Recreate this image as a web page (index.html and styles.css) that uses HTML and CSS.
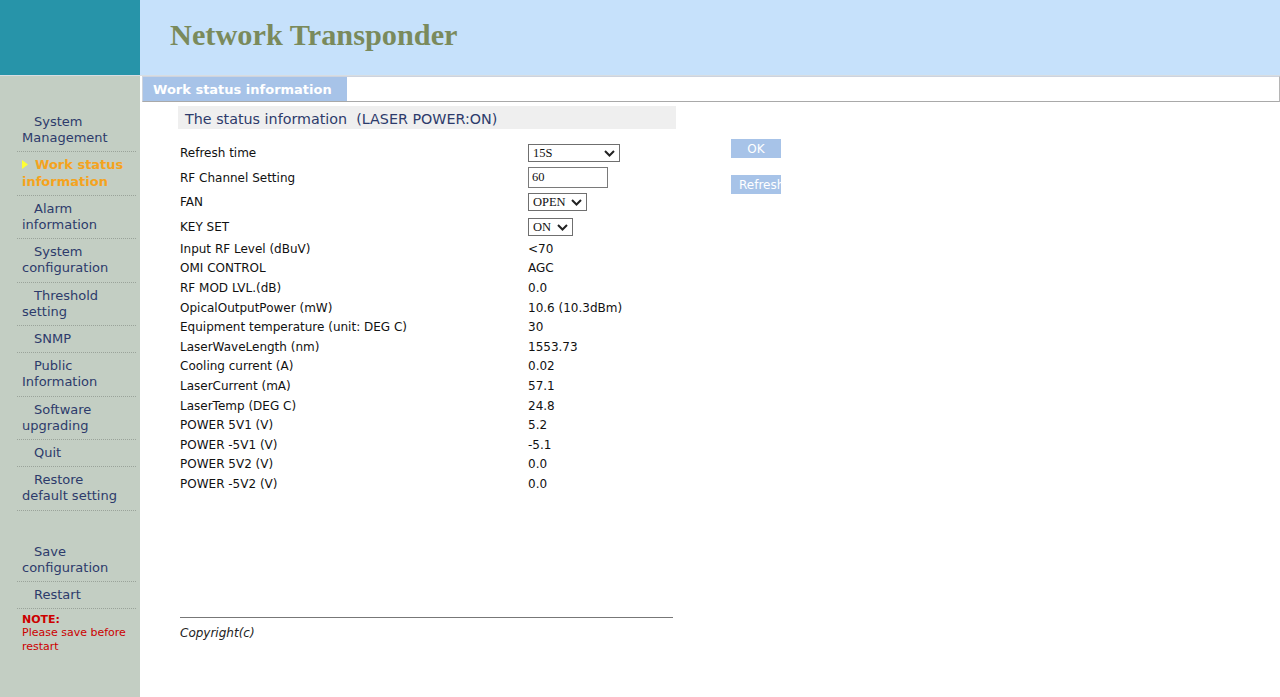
FILE: index.html
```html
<!DOCTYPE html>
<html>
<head>
<meta charset="utf-8">
<title>Network Transponder</title>
<link rel="stylesheet" href="styles.css">
</head>
<body>
<div class="page">
  <header class="top">
    <div class="logo-block"></div>
    <div class="title-block"><h1 class="title">Network Transponder</h1></div>
  </header>
  <div class="body">
    <nav class="side">
      <ul class="menu">
        <li class="item">System Management</li>
        <li class="item active"><svg class="arrow" width="6" height="9" viewBox="0 0 6 9"><path d="M0 0 L6 4.5 L0 9 Z" fill="#ffff33"/></svg>Work status information</li>
        <li class="item">Alarm information</li>
        <li class="item">System configuration</li>
        <li class="item">Threshold setting</li>
        <li class="item">SNMP</li>
        <li class="item">Public Information</li>
        <li class="item">Software upgrading</li>
        <li class="item">Quit</li>
        <li class="item">Restore default setting</li>
      </ul>
      <ul class="menu menu-second">
        <li class="item">Save configuration</li>
        <li class="item">Restart</li>
      </ul>
      <div class="note">
        <div class="note-title">NOTE:</div>
        <div class="note-text">Please save before restart</div>
      </div>
    </nav>
    <main class="main">
      <div class="tabbar"><div class="tab">Work status information</div></div>
      <div class="content">
        <div class="form-area">
          <div class="status-box">The status information&nbsp;&nbsp;(LASER POWER:ON)</div>
          <table class="data">
            <tr class="form-row"><td class="label">Refresh time</td><td class="value">
              <span class="sel sel-refresh"><select><option>15S</option></select><svg class="chev" width="11" height="7" viewBox="0 0 11 7"><path d="M1 1 L5.5 5.5 L10 1" fill="none" stroke="#222" stroke-width="2"/></svg></span>
            </td></tr>
            <tr class="form-row"><td class="label">RF Channel Setting</td><td class="value"><input class="txt" type="text" value="60"></td></tr>
            <tr class="form-row"><td class="label">FAN</td><td class="value">
              <span class="sel sel-fan"><select><option>OPEN</option></select><svg class="chev" width="11" height="7" viewBox="0 0 11 7"><path d="M1 1 L5.5 5.5 L10 1" fill="none" stroke="#222" stroke-width="2"/></svg></span>
            </td></tr>
            <tr class="form-row"><td class="label">KEY SET</td><td class="value">
              <span class="sel sel-key"><select><option>ON</option></select><svg class="chev" width="11" height="7" viewBox="0 0 11 7"><path d="M1 1 L5.5 5.5 L10 1" fill="none" stroke="#222" stroke-width="2"/></svg></span>
            </td></tr>
            <tr class="text-row"><td class="label">Input RF Level (dBuV)</td><td class="value">&lt;70</td></tr>
            <tr class="text-row"><td class="label">OMI CONTROL</td><td class="value">AGC</td></tr>
            <tr class="text-row"><td class="label">RF MOD LVL.(dB)</td><td class="value">0.0</td></tr>
            <tr class="text-row"><td class="label">OpicalOutputPower (mW)</td><td class="value">10.6 (10.3dBm)</td></tr>
            <tr class="text-row"><td class="label">Equipment temperature (unit: DEG C)</td><td class="value">30</td></tr>
            <tr class="text-row"><td class="label">LaserWaveLength (nm)</td><td class="value">1553.73</td></tr>
            <tr class="text-row"><td class="label">Cooling current (A)</td><td class="value">0.02</td></tr>
            <tr class="text-row"><td class="label">LaserCurrent (mA)</td><td class="value">57.1</td></tr>
            <tr class="text-row"><td class="label">LaserTemp (DEG C)</td><td class="value">24.8</td></tr>
            <tr class="text-row"><td class="label">POWER 5V1 (V)</td><td class="value">5.2</td></tr>
            <tr class="text-row"><td class="label">POWER -5V1 (V)</td><td class="value">-5.1</td></tr>
            <tr class="text-row"><td class="label">POWER 5V2 (V)</td><td class="value">0.0</td></tr>
            <tr class="text-row"><td class="label">POWER -5V2 (V)</td><td class="value">0.0</td></tr>
          </table>
          <footer class="footer">
            <div class="copyright">Copyright(c)</div>
          </footer>
        </div>
        <div class="buttons">
          <div class="btn btn-ok">OK</div>
          <div class="btn btn-refresh">Refresh</div>
        </div>
      </div>
    </main>
  </div>
</div>
</body>
</html>
```

FILE: styles.css
```css
* { box-sizing: border-box; }
html, body { margin: 0; padding: 0; background: #ffffff; }
body {
  font-family: "DejaVu Sans", Verdana, sans-serif;
  width: 1280px;
  height: 697px;
  overflow: hidden;
}
.page { display: flex; flex-direction: column; height: 697px; }

.top {
  display: flex;
  height: 76px;
  border-bottom: 1px solid #d7dde2;
}
.logo-block { width: 140px; background: #2794a9; }
.title-block {
  flex: 1;
  background: #c6e1fb;
  padding: 17px 0 0 30px;
}
.title {
  margin: 0;
  font-family: "Liberation Serif", "Times New Roman", serif;
  font-weight: bold;
  font-size: 30.3px;
  line-height: 36px;
  color: #7a8a5c;
}

.body { display: flex; flex: 1; min-height: 0; }

.side {
  width: 140px;
  background: #c3cec3;
  padding-top: 33px;
}
.menu { list-style: none; margin: 0; padding: 0; }
.item {
  margin: 0 4px 0 17px;
  padding: 5px 6px 5px 5px;
  text-indent: 12px;
  font-size: 13px;
  line-height: 16.2px;
  color: #2d3b6b;
  border-bottom: 1px dotted #9aa39a;
}
.item.active {
  text-indent: 0;
  color: #f5a31e;
  font-weight: bold;
}
.arrow { margin-right: 7px; vertical-align: 0; }
.menu-second { margin-top: 28px; }
.note {
  margin: 4px 0 0 17px;
  padding-left: 5px;
  font-size: 11px;
  color: #cc0000;
}
.note-title { font-weight: bold; line-height: 13px; }
.note-text { line-height: 14px; width: 110px; }

.main { flex: 1; }
.tabbar {
  margin-left: 2px;
  height: 26px;
  border-top: 1px solid #cdd3de;
  border-left: 1px solid #cdd3de;
  border-right: 1px solid #b5b5b5;
  border-bottom: 1px solid #a9a9a9;
  background: #ffffff;
}
.tab {
  width: 204px;
  height: 24px;
  background: #a7c3e8;
  color: #ffffff;
  font-weight: bold;
  font-size: 13px;
  line-height: 24px;
  padding: 1px 0 0 10px;
  white-space: nowrap;
}

.content {
  display: flex;
  padding: 4px 0 0 38px;
}
.form-area { width: 498px; }
.status-box {
  height: 23px;
  background: #efefef;
  padding-left: 7px;
  font-size: 14.3px;
  line-height: 26px;
  color: #2d3b6b;
  white-space: nowrap;
}
.data {
  margin: 12px 0 0 2px;
  border-collapse: collapse;
  font-size: 12px;
  color: #111111;
}
.data td { padding: 0; vertical-align: middle; }
.label { width: 348px; }
.form-row { height: 24.5px; }
.text-row { height: 19.6px; }

.sel { position: relative; display: inline-block; vertical-align: middle; }
.sel select {
  -webkit-appearance: none;
  appearance: none;
  height: 18px;
  border: 1px solid #6f6f6f;
  border-radius: 0;
  background: #ffffff;
  font-family: "Liberation Serif", "Times New Roman", serif;
  font-size: 12.5px;
  padding: 0 0 0 4px;
  color: #111;
  display: block;
}
.sel-refresh select { width: 92px; }
.sel-fan select { width: 59px; }
.sel-key select { width: 45px; }
.chev { position: absolute; right: 5px; top: 6px; pointer-events: none; }
.txt {
  width: 80px;
  height: 21px;
  border: 1px solid #7a7a7a;
  font-family: "Liberation Serif", "Times New Roman", serif;
  font-size: 12.5px;
  padding: 0 0 0 3px;
  vertical-align: middle;
  color: #111;
}

.buttons {
  margin-left: 55px;
  padding-top: 33px;
  display: flex;
  flex-direction: column;
  gap: 17px;
}
.btn {
  width: 50px;
  height: 19px;
  background: #a7c3e8;
  color: #ffffff;
  font-size: 12px;
  line-height: 19px;
  padding-top: 1px;
  overflow: hidden;
  white-space: nowrap;
}
.btn-ok { text-align: center; }
.btn-refresh { padding-left: 8px; }

.footer {
  margin: 123px 0 0 2px;
  width: 493px;
  border-top: 1px solid #777777;
  padding-top: 8px;
}
.copyright {
  font-style: italic;
  font-size: 12px;
  line-height: 15px;
  color: #222;
}
```
